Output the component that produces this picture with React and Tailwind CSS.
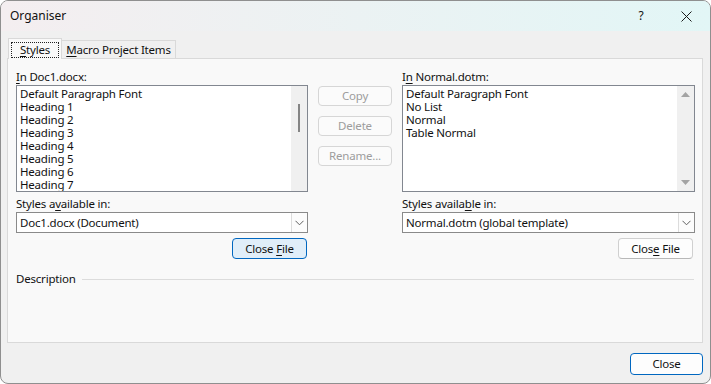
import React from 'react';

const leftItems = [
  'Default Paragraph Font',
  'Heading 1',
  'Heading 2',
  'Heading 3',
  'Heading 4',
  'Heading 5',
  'Heading 6',
  'Heading 7',
];

const rightItems = ['Default Paragraph Font', 'No List', 'Normal', 'Table Normal'];

function Key({ children }) {
  return <span className="underline decoration-1 underline-offset-[2px]">{children}</span>;
}

function Chevron() {
  return (
    <svg width="9" height="6" viewBox="0 0 9 6" className="block">
      <polyline points="0.5,0.8 4.5,4.8 8.5,0.8" fill="none" stroke="#606060" strokeWidth="1" />
    </svg>
  );
}

function Combo({ value }) {
  return (
    <div className="h-[21px] flex border border-[#8a8a8a] bg-white">
      <div className="flex-1 pl-[3px] leading-[19px] truncate">{value}</div>
      <div className="w-[16px] flex items-center justify-center border-l border-[#dcdcdc] bg-[#fcfcfc]">
        <Chevron />
      </div>
    </div>
  );
}

function ActionButton({ children }) {
  return (
    <div className="h-[20px] flex items-center justify-center rounded-[4px] border border-[#d6d6d6] bg-[#fbfbfb] text-[#9d9d9d]">
      {children}
    </div>
  );
}

export default function App() {
  return (
    <div className="w-[711px] h-[384px] flex flex-col bg-[#f0f0f0] border border-[#8f8f8f] rounded-[8px] overflow-hidden text-[11.5px] tracking-[-0.2px] text-[#111] font-['Noto_Sans',sans-serif]">
      {/* title bar */}
      <div className="h-[30px] flex items-center bg-linear-to-r from-[#f4eef0] to-[#e2f6f6] text-[12px] tracking-normal">
        <span className="pl-[9px] flex-1">Organiser</span>
        <span className="w-[12px] text-center mr-[34px]">?</span>
        <svg width="11" height="11" viewBox="0 0 11 11" className="mr-[18px]">
          <path d="M0.5 0.5 L10.5 10.5 M10.5 0.5 L0.5 10.5" stroke="#1a1a1a" strokeWidth="1" />
        </svg>
      </div>

      <div className="flex-1 flex flex-col pl-[6px] pr-[7px]">
        {/* tabs */}
        <div className="mt-[7px] h-[20px] flex items-end pl-[1px]">
          <div className="relative z-10 h-[21px] w-[54px] -mb-[1px] bg-[#f9f9f9] border border-b-0 border-[#d9d9d9] flex items-start pt-[3px] px-[2px]">
            <div className="w-full h-[16px] border border-dotted border-[#222] flex items-center justify-center">
              <span>
                <Key>S</Key>tyles
              </span>
            </div>
          </div>
          <div className="h-[18px] w-[114px] border border-b-0 border-l-0 border-[#d9d9d9] bg-[#f0f0f0] flex items-center justify-center">
            <span>
              <Key>M</Key>acro Project Items
            </span>
          </div>
        </div>

        {/* panel */}
        <div className="h-[285px] border border-[#d9d9d9] bg-[#f9f9f9] pl-[8px] pr-[6px] pt-[10px] flex flex-col">
          <div className="grid grid-cols-[292px_74px_293px] gap-x-[10px]">
            {/* left column */}
            <div className="flex flex-col">
              <div className="h-[16px] leading-[16px]">
                <Key>I</Key>n Doc1.docx:
              </div>
              <div className="h-[107px] flex border border-[#828790] bg-white">
                <div className="flex-1 pl-[3px] pt-[1px] leading-[13px] overflow-hidden">
                  {leftItems.map((item) => (
                    <div key={item}>{item}</div>
                  ))}
                </div>
                <div className="w-[16px] bg-[#f0f0f0] pt-[18px] flex justify-center">
                  <div className="w-[2px] h-[28px] bg-[#858585]" />
                </div>
              </div>
              <div className="mt-[4px] h-[16px] leading-[16px]">
                Styles a<Key>v</Key>ailable in:
              </div>
              <Combo value="Doc1.docx (Document)" />
              <div className="mt-[5px] flex justify-end pr-[1px]">
                <div className="w-[75px] h-[21px] flex items-center justify-center rounded-[4px] border border-[#0067c0] bg-[#e0eef9]">
                  <span>
                    Close <Key>F</Key>ile
                  </span>
                </div>
              </div>
            </div>

            {/* middle buttons */}
            <div className="pt-[17px] flex flex-col gap-[10px]">
              <ActionButton>Copy</ActionButton>
              <ActionButton>Delete</ActionButton>
              <ActionButton>Rename...</ActionButton>
            </div>

            {/* right column */}
            <div className="flex flex-col">
              <div className="h-[16px] leading-[16px]">
                I<Key>n</Key> Normal.dotm:
              </div>
              <div className="h-[107px] flex border border-[#828790] bg-white">
                <div className="flex-1 pl-[3px] pt-[1px] leading-[13px] overflow-hidden">
                  {rightItems.map((item) => (
                    <div key={item}>{item}</div>
                  ))}
                </div>
                <div className="w-[17px] bg-[#f0f0f0] flex flex-col items-center justify-between pt-[6px] pb-[6px]">
                  <svg width="9" height="5" viewBox="0 0 9 5">
                    <polygon points="0,5 4.5,0 9,5" fill="#a3a3a3" />
                  </svg>
                  <svg width="9" height="5" viewBox="0 0 9 5">
                    <polygon points="0,0 4.5,5 9,0" fill="#a3a3a3" />
                  </svg>
                </div>
              </div>
              <div className="mt-[4px] h-[16px] leading-[16px]">
                Styles availa<Key>b</Key>le in:
              </div>
              <Combo value="Normal.dotm (global template)" />
              <div className="mt-[5px] flex justify-end pr-[2px]">
                <div className="w-[75px] h-[21px] flex items-center justify-center rounded-[4px] border border-[#d0d0d0] border-b-[#b8b8b8] bg-[#fdfdfd]">
                  <span>
                    Clos<Key>e</Key> File
                  </span>
                </div>
              </div>
            </div>
          </div>

          {/* description */}
          <div className="mt-[13px] flex items-center gap-[6px] pr-[2px]">
            <span className="leading-[14px]">Description</span>
            <div className="flex-1 h-px bg-[#dcdcdc]" />
          </div>
        </div>

        {/* footer */}
        <div className="mt-[10px] flex justify-end">
          <div className="w-[73px] h-[22px] flex items-center justify-center rounded-[4px] border border-[#0067c0] bg-[#fdfdfd]">
            Close
          </div>
        </div>
      </div>
    </div>
  );
}
